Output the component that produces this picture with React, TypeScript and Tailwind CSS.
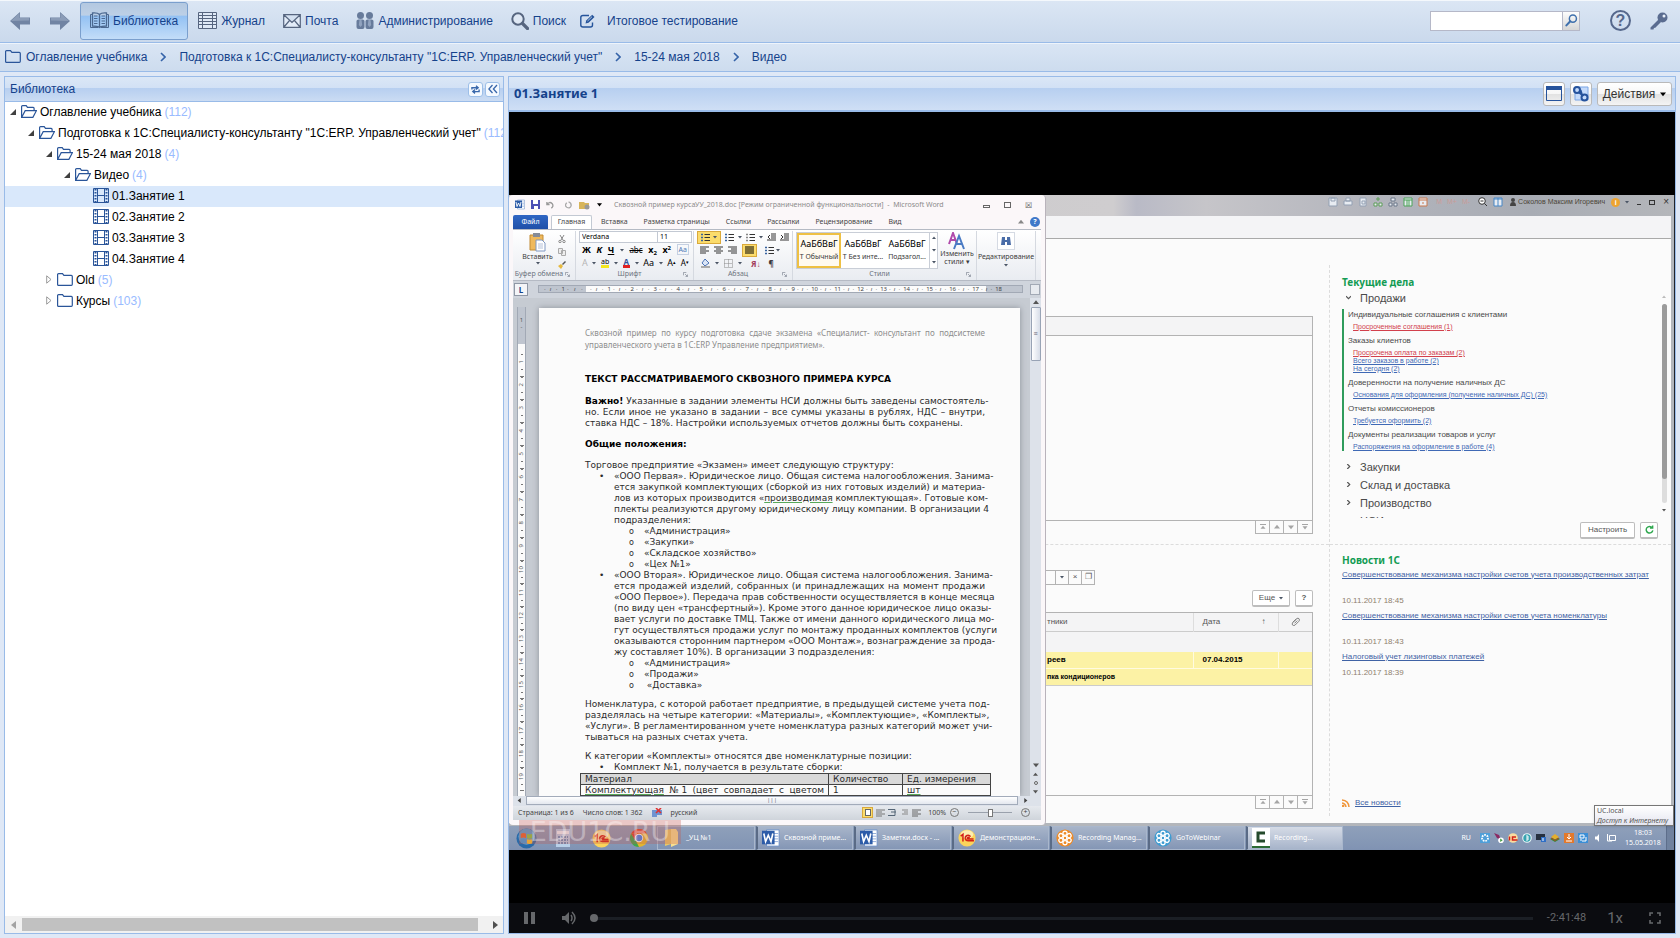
import type { ReactNode } from "react";
import clsx from "clsx";

const crumbs = [
  "Оглавление учебника",
  'Подготовка к 1С:Специалисту-консультанту "1С:ERP. Управленческий учет"',
  "15-24 мая 2018",
  "Видео",
];

type Node = { label: string; count?: number; pad: string; kind: "open" | "closed" | "film" };

const tree: Node[] = [
  { label: "Оглавление учебника", count: 112, pad: "pl-[4px]", kind: "open" },
  { label: crumbs[1], count: 112, pad: "pl-[22px]", kind: "open" },
  { label: "15-24 мая 2018", count: 4, pad: "pl-[40px]", kind: "open" },
  { label: "Видео", count: 4, pad: "pl-[58px]", kind: "open" },
  { label: "01.Занятие 1", pad: "pl-[76px]", kind: "film" },
  { label: "02.Занятие 2", pad: "pl-[76px]", kind: "film" },
  { label: "03.Занятие 3", pad: "pl-[76px]", kind: "film" },
  { label: "04.Занятие 4", pad: "pl-[76px]", kind: "film" },
  { label: "Old", count: 5, pad: "pl-[40px]", kind: "closed" },
  { label: "Курсы", count: 103, pad: "pl-[40px]", kind: "closed" },
];

/* ---------- icons ---------- */

const Arrow = ({ flip }: { flip?: boolean }) => (
  <svg viewBox="0 0 20 20" className={clsx("w-5 h-5", flip && "-scale-x-100")}>
    <path d="M0 10 10 1v5.500h10v7H10V19z" fill="#7184a3" />
    <path d="M1 10 9.500 2v5H19v2.500z" fill="#8b9cb7" />
  </svg>
);

const BookIcon = () => (
  <svg viewBox="0 0 19 17" className="w-[19px] h-[17px]" fill="none" stroke="#4b6890">
    <path d="M9.500 2.500C8 1 5 .8 2.500 1v13c3 0 5.500.2 7 1.500 1.500-1.300 4-1.500 7-1.500V1c-2.500-.2-5.500 0-7 1.500zv13" strokeWidth="1.300" />
    <path d="M2.500 2.500h-2v13h7.500M16.500 2.500h2v13H11M4 4h3.500M4 6.500h3.500M4 9h3.500M4 11.500h3.500M11.500 4H15M11.500 6.500H15M11.500 9H15M11.500 11.500H15" />
  </svg>
);

const JournalIcon = () => (
  <svg viewBox="0 0 19 17" className="w-[19px] h-[17px]" fill="#dfe9f6" stroke="#56657f">
    <path d="M.5.500h18v16H.500zM.500 3.500h18M.500 6.500h18M.500 9.500h18M.500 12.500h18M4.500.500v16M14.500.500v16" />
  </svg>
);

const MailIcon = () => (
  <svg viewBox="0 0 18 14" className="w-[18px] h-[14px]" fill="#e3ecf8" stroke="#56657f" strokeWidth="1.200">
    <path d="M.7.700h16.600v12.600H.700zM1 1l8 7.500L17 1M1 13l5.500-6.500M17 13l-5.500-6.500" />
  </svg>
);

const PeopleIcon = () => (
  <svg viewBox="0 0 18 17" className="w-[18px] h-[17px]" fill="#677b9b">
    <circle cx="4.500" cy="3.500" r="3.500" />
    <circle cx="13.500" cy="3.500" r="3.500" />
    <path d="M.5 9q0-1.500 2-1.500h4q2 0 2 1.500v6q0 2-2 2h-4q-2 0-2-2zM9.500 9q0-1.500 2-1.500h4q2 0 2 1.500v6q0 2-2 2h-4q-2 0-2-2z" />
    <path d="M3.500 8h2l.7 5-1.700 2-1.700-2zM12.500 8h2l.7 5-1.700 2-1.700-2z" fill="#91a3bf" />
  </svg>
);

const SearchIcon = () => (
  <svg viewBox="0 0 18 18" className="w-[18px] h-[18px]" fill="none">
    <circle cx="7" cy="7" r="5.700" stroke="#56657f" strokeWidth="2" fill="#dfe8f4" />
    <path d="m11.500 11.500 5 5" stroke="#56657f" strokeWidth="3.200" strokeLinecap="round" />
  </svg>
);

const EditIcon = () => (
  <svg viewBox="0 0 16 14" className="w-4 h-[14px]" fill="none" stroke="#25549b" strokeWidth="1.400">
    <path d="M9 1.500H3q-2.200 0-2.200 2v7.500q0 2 2.200 2h7.500q2 0 2-2V8.500" />
    <path d="m5.500 9.500.7-3 6-5.800 2.300 2.200-6 5.800z" fill="#25549b" stroke="none" />
    <path d="m7.500 7 4.500-4.300" stroke="#d5e2f2" strokeWidth=".8" />
  </svg>
);

const Magnifier = () => (
  <svg viewBox="0 0 14 14" className="w-[13px] h-[13px]" fill="none" stroke="#3f70ad">
    <circle cx="8.500" cy="5" r="3.800" strokeWidth="1.600" />
    <path d="M5.700 7.800 1.500 12.300" strokeWidth="2.200" strokeLinecap="round" />
  </svg>
);

const KeyIcon = () => (
  <svg viewBox="0 0 18 18" className="w-[18px] h-[18px]" fill="#5a6c90">
    <circle cx="12.500" cy="5.500" r="5" />
    <path d="m8.500 7.500 2.500 2.500-6 6-1-.300-.500 1.800H.500v-2z" />
    <circle cx="14" cy="4" r="1.500" fill="#e8f0fa" />
  </svg>
);

const FolderIcon = ({ open }: { open?: boolean }) => (
  <svg viewBox="0 0 16 13" className="w-4 h-[13px] shrink-0" fill="none" stroke="#2a5599" strokeWidth="1.200">
    {open ? (
      <path d="M.6 12.300V1.500q0-.900 1-.900h3.600l1.300 1.800h5.700q.900 0 .900 1v2.200M.700 12.300 4.200 5.700h11.200l-3.500 6.600z" />
    ) : (
      <path d="M.6 11.200V1.600q0-1 1-1h3.900l1.400 1.800h7.400q1 0 1 1v7.800q0 1.200-1 1.200H1.600q-1 0-1-1.200z" />
    )}
  </svg>
);

const FilmIcon = () => (
  <svg viewBox="0 0 16 15" className="w-4 h-[15px] shrink-0" fill="none" stroke="#2a5599">
    <path d="M.5.500h15v14H.500zM4.500.500v14M11.500.500v14M4.500 7.500h7" />
    <path d="M2.500 1v13M13.500 1v13" strokeWidth="2" strokeDasharray="1.500 1.500" />
  </svg>
);

const Chevron = () => (
  <svg viewBox="0 0 6 10" className="w-[6px] h-[10px]" fill="none" stroke="#3563a8" strokeWidth="1.600">
    <path d="m1 1 4 4-4 4" />
  </svg>
);

const Tri = ({ dir = "down", className }: { dir?: "down" | "up" | "left" | "right"; className?: string }) => {
  const d = { down: "M0 2h8L4 7z", up: "M0 6h8L4 1z", left: "M6 0v8L1 4z", right: "M2 0v8l5-4z" }[dir];
  return (
    <svg viewBox="0 0 8 8" className={clsx("shrink-0", className ?? "w-1 h-1 text-gray-600")}>
      <path d={d} fill="currentColor" />
    </svg>
  );
};

const WordLogo = ({ className }: { className: string }) => (
  <svg viewBox="0 0 20 20" className={className}>
    <path d="M5 1h14v18H5z" fill="#fff" stroke="#6b8fc7" />
    <path d="M13 5h5M13 8h5M13 11h5M13 14h5" stroke="#8aa7d6" />
    <path d="M0 2h14v15H0z" fill="#2d5ca8" />
    <path d="m2 5 2 9 3-7 3 7 2-9" fill="none" stroke="#fff" strokeWidth="1.800" />
  </svg>
);

const OneC = ({ className }: { className: string }) => (
  <svg viewBox="0 0 20 20" className={className}>
    <circle cx="10" cy="10" r="9.500" fill="#fbd45a" />
    <ellipse cx="10" cy="6" rx="7" ry="4.500" fill="#fdeeb0" />
    <path d="M3 8 5.500 6v8M14 8.500q-1.500-2-4-1.200-2.300 1-1.800 3.500.500 2.200 3 2.200h6.500M13 10q-1-1-2.200-.400-.800 1 .500 1.400h6" fill="none" stroke="#d32217" strokeWidth="1.700" />
  </svg>
);

const Flower = ({ className, color }: { className: string; color: string }) => (
  <svg viewBox="0 0 20 20" className={className}>
    <circle cx="10" cy="10" r="9.500" fill={color} />
    {[0, 60, 120, 180, 240, 300].map((a) => (
      <circle key={a} cx="10" cy="4.800" r="2.300" fill="none" stroke="#fff" strokeWidth="1.400" transform={`rotate(${a} 10 10)`} />
    ))}
    <circle cx="10" cy="10" r="2" fill="none" stroke="#fff" strokeWidth="1.300" />
  </svg>
);

/* ---------- portal chrome ---------- */

const NavButton = ({ icon, children, className }: { icon: ReactNode; children: ReactNode; className?: string }) => (
  <button type="button" className={clsx("flex items-center gap-1 whitespace-nowrap", className)}>
    {icon}
    {children}
  </button>
);

const TopBar = () => (
  <header className="h-[43px] shrink-0 flex items-center pl-[10px] pr-3 pb-[2px] border-b border-[#99bbe8] border-t border-t-[#f4f8fc] bg-linear-to-b from-[#dbe6f4] to-[#cad9ec]">
    <button type="button" aria-label="Назад"><Arrow /></button>
    <button type="button" aria-label="Вперед" className="ml-5"><Arrow flip /></button>
    <nav className="flex items-center ml-[10px]">
      <NavButton
        icon={<BookIcon />}
        className="h-[38px] px-[9px] rounded-[3px] border border-[#7a9fcd] bg-[linear-gradient(#b3c8e0_0,#bdd0e6_34%,#93c1f3_36%,#c3ddf8_100%)]"
      >
        Библиотека
      </NavButton>
      <NavButton icon={<JournalIcon />} className="ml-[10px]">Журнал</NavButton>
      <NavButton icon={<MailIcon />} className="ml-[18px]">Почта</NavButton>
      <NavButton icon={<PeopleIcon />} className="ml-[18px]">Администрирование</NavButton>
      <NavButton icon={<SearchIcon />} className="ml-[18px]">Поиск</NavButton>
      <NavButton icon={<EditIcon />} className="ml-[14px] gap-[11px]">Итоговое тестирование</NavButton>
    </nav>
    <form className="ml-auto flex h-5">
      <input type="text" aria-label="Поиск по тексту" className="w-[133px] border border-[#b5b8c8] bg-white px-1 outline-none" />
      <button type="button" aria-label="Найти" className="w-[17px] flex items-center justify-center border border-l-0 border-[#b5b8c8] bg-linear-to-b from-[#fdfdfd] to-[#d6d6d6]">
        <Magnifier />
      </button>
    </form>
    <button type="button" aria-label="Справка" className="ml-[30px] w-[21px] h-[21px] rounded-full border-2 border-[#56688c] text-[#56688c] text-[16px] leading-[16px] font-bold flex items-center justify-center">
      ?
    </button>
    <button type="button" aria-label="Доступ" className="ml-[19px]"><KeyIcon /></button>
  </header>
);

const Breadcrumbs = () => (
  <nav className="h-[29px] shrink-0 flex items-center gap-[13px] px-[5px] pb-[2px] border-b border-[#99bbe8] border-t border-t-[#eef4fb] bg-linear-to-b from-[#d9e5f4] to-[#cddcee]">
    {crumbs.map((c, i) => (
      <span key={c} className="flex items-center gap-[13px] whitespace-nowrap">
        {i > 0 && <Chevron />}
        <a href="#" className="flex items-center gap-[5px]">
          {i === 0 && <FolderIcon />}
          {c}
        </a>
      </span>
    ))}
  </nav>
);

const ToolButton = ({ label, children }: { label: string; children: ReactNode }) => (
  <button type="button" aria-label={label} className="w-[15px] h-[15px] rounded-[3px] border border-[#9dbfe8] bg-[#f4f9ff] flex items-center justify-center">
    {children}
  </button>
);

const TreePanel = () => (
  <aside className="w-[500px] shrink-0 flex flex-col border border-[#99bbe8] bg-white">
    <div className="h-[25px] shrink-0 flex items-center gap-[2px] pl-[5px] pr-[3px] border-b border-[#99bbe8] bg-[linear-gradient(#dbe7f6_0,#d2e1f5_45%,#b7cff0_48%,#cbdcf3_100%)]">
      <h2 className="flex-1">Библиотека</h2>
      <ToolButton label="Обновить">
        <svg viewBox="0 0 10 10" className="w-[9px] h-[9px]" fill="none" stroke="#3a68ab" strokeWidth="1.500">
          <path d="M1 5V3h6M5.500.800 8 3 5.500 5M9 5v2.300H3M4.500 5 2 7.300l2.500 2" />
        </svg>
      </ToolButton>
      <ToolButton label="Свернуть">
        <svg viewBox="0 0 10 10" className="w-[10px] h-[10px]" fill="none" stroke="#3a68ab" strokeWidth="1.300">
          <path d="M4.500 1 .9 5l3.600 4M9 1 5.400 5 9 9" />
        </svg>
      </ToolButton>
    </div>
    <ul className="flex-1 overflow-hidden text-black">
      {tree.map((n) => (
        <li key={n.label} className={clsx("h-[21px] flex items-center pb-[2px] whitespace-nowrap", n.pad, n.label.startsWith("01.") && "bg-[#d9e8fb]")}>
          <span className="w-[12px] shrink-0">
            {n.kind === "open" && (
              <svg viewBox="0 0 7 7" className="w-[6px] h-[6px] ml-[1px]"><path d="M7 0v7H0z" fill="#404040" /></svg>
            )}
            {n.kind === "closed" && (
              <svg viewBox="0 0 6 9" className="w-[6px] h-[9px] ml-[1px]"><path d="M.7.800v7.400L5 4.500z" fill="#fff" stroke="#9a9a9a" /></svg>
            )}
          </span>
          <a href="#" className="flex items-center gap-[3px]">
            {n.kind === "film" ? <FilmIcon /> : <FolderIcon open={n.kind === "open"} />}
            {n.label}
            {n.count && <span className="text-[#99bbff]">({n.count})</span>}
          </a>
        </li>
      ))}
    </ul>
    <div className="h-[17px] shrink-0 flex items-center bg-[#f1f1f1]">
      <span className="w-[17px] flex justify-center"><Tri dir="left" className="w-2 h-2 text-[#a3a3a3]" /></span>
      <span className="flex-1 h-[13px] bg-[#c1c1c1] mr-2" />
      <span className="w-[17px] flex justify-center"><Tri dir="right" className="w-2 h-2 text-[#505050]" /></span>
    </div>
  </aside>
);

/* ---------- Word window ---------- */

const PARA = "[text-align-last:justify]";

const Lines = ({ lines }: { lines: ReactNode[] }) => (
  <>
    {lines.map((l, i) => (
      <span key={i} className={clsx("block whitespace-nowrap", i < lines.length - 1 && PARA)}>{l}</span>
    ))}
  </>
);

const Spell = ({ children }: { children: ReactNode }) => (
  <span className="underline decoration-[#58a85a]">{children}</span>
);

const SubList = ({ items }: { items: string[] }) => (
  <ul>
    {items.map((s) => (
      <li key={s} className="flex whitespace-pre">
        <span className="w-[30px] shrink-0 pl-[15px] text-[8px]">o</span>
        {s}
      </li>
    ))}
  </ul>
);

const Bullet = ({ lines, children }: { lines: ReactNode[]; children?: ReactNode }) => (
  <li className="flex">
    <span className="w-[29px] shrink-0 pl-[14px]">•</span>
    <div className="flex-1 min-w-0">
      <Lines lines={lines} />
      {children}
    </div>
  </li>
);

const first = [
  "«ООО Первая». Юридическое лицо. Общая система налогообложения. Занима-",
  "ется закупкой комплектующих (сборкой из них готовых изделий) и материа-",
  <>лов из которых производится «<Spell>производимая</Spell> комплектующая». Готовые ком-</>,
  "плекты реализуются другому юридическому лицу компании. В организации 4",
  "подразделения:",
];

const second = [
  "«ООО Вторая». Юридическое лицо. Общая система налогообложения. Занима-",
  "ется продажей изделий, собранных (и принадлежащих на момент продажи",
  "«ООО Первое»). Передача прав собственности осуществляется в конце месяца",
  "(по виду цен «трансфертный»). Кроме этого данное юридическое лицо оказы-",
  "вает услуги по доставке ТМЦ. Также от имени данного юридического лица мо-",
  "гут осуществляться продажи услуг по монтажу проданных комплектов (услуги",
  "оказываются сторонним партнером «ООО Монтаж», вознаграждение за прода-",
  "жу составляет 10%). В организации 3 подразделения:",
];

const DocumentPage = () => (
  <article className="flex-1 min-w-0 mt-[10px] ml-[13px] mr-[10px] pt-[19px] pl-[46px] pr-[35px] bg-[#fbfbfb] shadow-[0_0_6px_#8c9199] font-['DejaVu_Sans',sans-serif] text-[9px] leading-[11px] text-[#2b2b2b]">
    <p className="font-['Noto_Sans',sans-serif] text-[8px] leading-[12px] text-[#8d8d8d] whitespace-nowrap">
      <span className={clsx("block", PARA)}>Сквозной пример по курсу подготовка сдаче экзамена «Специалист- консультант по подсистеме</span>
      управленческого учета в 1С:ERP Управление предприятием».
    </p>
    <h3 className="mt-[23px] font-bold text-black whitespace-nowrap">ТЕКСТ РАССМАТРИВАЕМОГО СКВОЗНОГО ПРИМЕРА КУРСА</h3>
    <p className="mt-[11px] whitespace-nowrap">
      <span className={clsx("block", PARA)}><b className="text-black">Важно!</b> Указанные в задании элементы НСИ должны быть заведены самостоятель-</span>
      <span className={clsx("block", PARA)}>но. Если иное не указано в задании – все суммы указаны в рублях, НДС – внутри,</span>
      ставка НДС – 18%. Настройки используемых отчетов должны быть сохранены.
    </p>
    <h3 className="mt-[10px] font-bold text-black">Общие положения:</h3>
    <p className="mt-[10px] whitespace-nowrap">Торговое предприятие «Экзамен» имеет следующую структуру:</p>
    <ul>
      <Bullet lines={first}>
        <SubList items={["«Администрация»", "«Закупки»", "«Складское хозяйство»", "«Цех №1»"]} />
      </Bullet>
      <Bullet lines={second}>
        <SubList items={["«Администрация»", "«Продажи»", " «Доставка»"]} />
      </Bullet>
    </ul>
    <p className="mt-[8px]">
      <Lines
        lines={[
          "Номенклатура, с которой работает предприятие, в предыдущей системе учета под-",
          "разделялась на четыре категории: «Материалы», «Комплектующие», «Комплекты»,",
          "«Услуги». В регламентированном учете номенклатура разных категорий может учи-",
          "тываться на разных счетах учета.",
        ]}
      />
    </p>
    <p className="mt-[8px]">К категории «Комплекты» относятся две номенклатурные позиции:</p>
    <ul>
      <Bullet lines={["Комплект №1, получается в результате сборки:"]} />
    </ul>
    <table className="-ml-[5px] w-[411px] table-fixed border-collapse border border-[#222] whitespace-nowrap leading-[10px]">
      <thead>
        <tr className="bg-[#d9d9d9] text-left">
          <th className="w-[248px] border border-[#444] px-1 py-0 font-normal">Материал</th>
          <th className="w-[74px] border border-[#444] px-1 py-0 font-normal">Количество</th>
          <th className="border border-[#444] px-1 py-0 font-normal">Ед. измерения</th>
        </tr>
      </thead>
      <tbody>
        <tr>
          <td className={clsx("border border-[#444] px-1 py-0", PARA)}>
            <Spell>Комплектующая</Spell> №1 (цвет совпадает с цветом
          </td>
          <td className="border border-[#444] px-1 py-0">1</td>
          <td className="border border-[#444] px-1 py-0"><Spell>шт</Spell></td>
        </tr>
      </tbody>
    </table>
  </article>
);

const AlignIcon = ({ d = "M0 1h9M0 3h6M0 5h9M0 7h6", color = "#333" }: { d?: string; color?: string }) => (
  <svg viewBox="0 0 9 8" className="w-[9px] h-2 shrink-0" fill="none" stroke={color}><path d={d} /></svg>
);

const ListIcon = ({ color = "#35629f" }: { color?: string }) => (
  <svg viewBox="0 0 9 9" className="w-[9px] h-[9px] shrink-0" fill="none">
    <path d="M0 1.500h2M0 4.500h2M0 7.500h2" stroke={color} strokeWidth="1.600" />
    <path d="M3.500 1.500H9M3.500 4.500H9M3.500 7.500H9" stroke="#333" />
  </svg>
);

const Launcher = () => (
  <svg viewBox="0 0 6 6" className="w-[5px] h-[5px] mr-[5px] shrink-0" fill="none" stroke="#8b929e"><path d="M.5 4V.500H4M2.500 2.500 5 5M5.500 3v2.500H3" /></svg>
);

const Group = ({ label, className, children }: { label?: string; className: string; children: ReactNode }) => (
  <div className={clsx("flex flex-col border-r border-[#d5d9e0]", className)}>
    <div className="flex-1 min-h-0">{children}</div>
    <div className="h-[11px] flex items-center text-[7px] leading-[10px] text-[#6c7480] whitespace-nowrap">
      <span className="flex-1 text-center">{label}</span>
      {label && <Launcher />}
    </div>
  </div>
);

const Ribbon = () => (
  <div className="h-[52px] shrink-0 flex pt-[1px] border-t border-b border-[#b5bac4] bg-linear-to-b from-white to-[#e9ecf1] text-[7px] leading-[9px] text-[#3b3b3b]">
    <Group label="Буфер обмена" className="w-[63px]">
      <div className="flex gap-1 pl-2 pt-[2px]">
        <button type="button" className="flex flex-col items-center w-[33px]">
          <svg viewBox="0 0 17 19" className="w-[17px] h-[19px]">
            <path d="M1 2h13v15H1z" fill="#efb95c" stroke="#c18b35" />
            <path d="M4 0h7v4H4z" fill="#868c98" />
            <path d="M7 7h6l3 3v8H7z" fill="#fff" stroke="#7f98c2" />
            <path d="M9 11h5M9 13h5M9 15h5" stroke="#b4c1d9" />
          </svg>
          Вставить
          <Tri />
        </button>
        <div className="flex flex-col gap-[5px] pt-[2px]">
          <svg viewBox="0 0 8 8" className="w-2 h-2" fill="none" stroke="#888"><path d="m2 0 3 5M6 0 3 5" /><circle cx="2" cy="6.500" r="1.200" /><circle cx="6" cy="6.500" r="1.200" /></svg>
          <svg viewBox="0 0 8 8" className="w-2 h-2" fill="#eee" stroke="#aaa"><path d="M.5.500h4v5h-4zM3.500 2.500h4v5h-4z" /></svg>
          <svg viewBox="0 0 8 8" className="w-2 h-2"><path d="m0 5 3-2 2 2-2 3z" fill="#e6b93f" /><path d="m4 3 3-3 1 1-3 3z" fill="#555" /></svg>
        </div>
      </div>
    </Group>
    <Group label="Шрифт" className="w-[118px]">
      <div className="flex pl-[3px] text-black">
        <select aria-label="Шрифт" className="appearance-none w-[79px] h-3 pl-[2px] border border-[#c3c9d3] bg-white text-[7px] leading-[9px]"><option>Verdana</option></select>
        <select aria-label="Размер" className="appearance-none w-[34px] h-3 pl-[2px] border border-l-0 border-[#c3c9d3] bg-white text-[7px] leading-[9px]"><option>11</option></select>
      </div>
      <div className="flex items-center justify-between pl-[6px] pr-1 h-[14px] text-[9px] text-black">
        <b>Ж</b><b className="italic">К</b><b className="underline">Ч</b><Tri /><span className="line-through text-[8px]">abc</span>
        <b>x<sub className="text-[6px]">2</sub></b><b>x<sup className="text-[6px]">2</sup></b>
        <span className="border border-[#c5d0e2] text-[#4f78b8] text-[7px] px-[1px]">Аа</span>
      </div>
      <div className="flex items-center justify-between pl-[6px] pr-1 h-[12px] text-[9px] text-black">
        <span className="text-[#b5b5b5]">A</span><Tri />
        <span className="border-b-[3px] border-[#f4e61c] text-[7px] leading-[7px]">ab</span><Tri />
        <b className="border-b-[3px] border-[#e02020] text-[#35549a] text-[8px] leading-[7px] px-[1px]">A</b><Tri />
        <span>Aa</span><Tri /><span>A<sup className="text-[5px]">▴</sup></span><span className="text-[8px]">A<sup className="text-[5px]">▾</sup></span>
      </div>
    </Group>
    <Group label="Абзац" className="w-[99px]">
      <div className="flex items-center gap-1 pl-[3px] h-[13px]">
        <span className="flex items-center gap-[3px] h-[13px] px-[3px] border border-[#d9a93c] bg-[#fbdc6c]"><ListIcon /><Tri /></span>
        <ListIcon /><Tri /><ListIcon color="#888" /><Tri />
        <AlignIcon d="M4 1h5M4 3h5M4 5h5M0 7h9M3 2 1 4l2 2" /><AlignIcon d="M4 1h5M4 3h5M4 5h5M0 7h9M1 2l2 2-2 2" />
      </div>
      <div className="flex items-center gap-[5px] pl-[6px] h-[13px]">
        <AlignIcon /><AlignIcon d="M0 1h9M2 3h5M0 5h9M2 7h5" /><AlignIcon d="M0 1h9M3 3h6M0 5h9M3 7h6" />
        <span className="flex items-center h-[13px] px-[2px] border border-[#d9a93c] bg-[#fbdc6c]"><AlignIcon d="M0 1h9M0 3h9M0 5h9M0 7h9" color="#000" /></span>
        <span className="flex items-center gap-[2px] ml-[3px]"><ListIcon /><Tri /></span>
      </div>
      <div className="flex items-center gap-[5px] pl-[7px] h-[13px] text-[8px]">
        <svg viewBox="0 0 9 9" className="w-[9px] h-[9px]"><path d="m4 0 4 4-4 3-3-3z" fill="#dbe6f7" stroke="#4d74b5" /><path d="M0 8h9" stroke="#aaa" strokeWidth="2" /></svg><Tri />
        <svg viewBox="0 0 9 9" className="w-[9px] h-[9px]" fill="none" stroke="#888" strokeDasharray="1 1"><path d="M.5.500h8v8h-8zM.500 4.500h8M4.500.500v8" /></svg><Tri />
        <b className="ml-1 text-[#a33d5c]">Я↓</b><b className="ml-[3px]">¶</b>
      </div>
    </Group>
    <Group label="Стили" className="w-[184px]">
      <div className="flex pl-[3px] pt-[1px]">
        <div className="flex w-[142px] h-[37px] border border-[#c9ced7] bg-white">
          {["Т Обычный", "Т Без инте...", "Подзагол..."].map((s, i) => (
            <button key={s} type="button" className={clsx("flex flex-col items-center justify-center gap-[4px] w-[44px] overflow-hidden whitespace-nowrap", i === 0 && "border-2 border-[#eec044] bg-[#fffaf0]")}>
              <span className="text-[9px] text-black">АаБбВвГ</span>
              <span>{s}</span>
            </button>
          ))}
          <span className="flex-1 flex flex-col items-center justify-around border-l border-[#c9ced7]"><Tri dir="up" /><Tri /><Tri /></span>
        </div>
        <button type="button" className="flex flex-col items-center flex-1">
          <svg viewBox="0 0 18 18" className="w-[18px] h-[18px]" fill="none" strokeWidth="2">
            <path d="M1 12 5 1l4 11M3 8h4" stroke="#b04bab" /><path d="m6 17 5-13 5 13M8 12h6" stroke="#4a7bc4" />
          </svg>
          <span className="leading-[8px]">Изменить<br />стили ▾</span>
        </button>
      </div>
    </Group>
    <Group className="w-[59px]">
      <button type="button" className="w-full flex flex-col items-center gap-[2px] pt-[1px]">
        <span className="w-[18px] h-[18px] flex items-center justify-center border border-[#d5dae3] bg-white">
          <svg viewBox="0 0 10 9" className="w-[10px] h-[9px]" fill="#4a6da8"><path d="M1 1h3v3h2V1h3l1 8H6V6H4v3H0z" /></svg>
        </span>
        Редактирование
        <Tri />
      </button>
    </Group>
  </div>
);

const HorizontalRuler = () => (
  <div className="h-[17px] shrink-0 flex items-center bg-[#cfd4dc]">
    <span className="w-[14px] h-[13px] ml-[1px] border border-[#8f97a5] bg-[#f4f5f8] text-[8px] leading-[11px] font-bold text-center">L</span>
    <div className="w-[485px] h-2 ml-[10px] pl-[3px] flex border border-[#a2a9b5] text-[6px] leading-[6px] text-[#444] bg-[linear-gradient(to_right,#bfc5cf_47px,#fbfbfb_47px,#fbfbfb_447px,#bfc5cf_447px)]">
      {["1", "", ...Array.from({ length: 18 }, (_, i) => String(i + 1))].map((n, i) => (
        <span key={i} className="w-[23px] flex justify-between pl-[2px]"><i>·</i><i>ı</i><i>·</i><span>{n}</span></span>
      ))}
    </div>
    <span className="ml-auto mr-[1px] w-[10px] h-[11px] border border-[#a2a9b5] bg-[#e7eaef]" />
  </div>
);

const VerticalRuler = () => (
  <div className="w-[9px] ml-1 mt-[9px] shrink-0 flex flex-col border-x border-[#a2a9b5] bg-[#fbfbfb] text-[6px] leading-[7px] text-[#555] overflow-hidden">
    <span className="h-[37px] shrink-0 pt-[10px] bg-[#bfc5cf] text-center">1<br />-</span>
    <div className="pt-[10px]">
      {Array.from({ length: 19 }, (_, i) => (
        <span key={i} className="h-[23px] flex flex-col items-center justify-between leading-[5px]">
          <span className="h-px w-[2px] bg-[#777]" />
          <span className="[writing-mode:vertical-rl] rotate-180">{i + 1}</span>
          <span className="h-px w-[2px] bg-[#777]" />
          <span className="h-px w-1 bg-[#777]" />
        </span>
      ))}
    </div>
  </div>
);

const WordWindow = () => (
  <section className="absolute left-0 top-0 w-[537px] h-[630px] flex flex-col px-1 pb-[5px] rounded-[4px] border-r border-[#b9b3bb] bg-[#fbf7f9] font-['Noto_Sans',sans-serif] overflow-hidden">
    <div className="h-5 shrink-0 flex items-center gap-[6px] pl-[2px] pr-[9px]">
      <WordLogo className="w-[10px] h-[11px]" />
      <svg viewBox="0 0 9 9" className="w-[9px] h-[9px]"><path d="M0 0h9v9H0z" fill="#4b50b4" /><path d="M2 0h5v4H2zM3 6h4v3H3z" fill="#fff" /></svg>
      <svg viewBox="0 0 9 9" className="w-2 h-2" fill="none" stroke="#999" strokeWidth="1.500"><path d="M1 1v3h3M1 4q3-4 6-1 2 3-1 5" /></svg>
      <svg viewBox="0 0 9 9" className="w-2 h-2 ml-[5px]" fill="none" stroke="#aaa" strokeWidth="1.500"><path d="M2 2q-3 3 0 5 4 2 5-2 0-3-3-4" /></svg>
      <svg viewBox="0 0 12 10" className="w-3 h-[10px]"><path d="M0 2h5l1 1h4v6H0z" fill="#d8b55a" /><circle cx="8" cy="7" r="2.500" fill="#999" /></svg>
      <Tri className="w-[5px] h-[5px] text-black" />
      <h3 className="ml-[6px] text-[7px] leading-[10px] text-[#8b8b8b] whitespace-nowrap">Сквозной пример курсаУУ_2018.doc [Режим ограниченной функциональности]&nbsp; -&nbsp; Microsoft Word</h3>
      <span className="ml-auto flex items-center gap-[14px]">
        <button type="button" aria-label="Свернуть окно" className="w-[7px] h-[3px] mt-1 border border-[#666]" />
        <button type="button" aria-label="Восстановить" className="w-[7px] h-[6px] border border-[#666]" />
        <button type="button" aria-label="Закрыть окно" className="text-[8px] leading-[8px] text-[#555]">☒</button>
      </span>
    </div>
    <div className="h-[14px] shrink-0 flex items-center text-[7px] leading-[10px] text-[#444] whitespace-nowrap">
      <button type="button" className="w-[35px] h-[14px] rounded-t-[2px] bg-linear-to-b from-[#2f66c4] to-[#1f4fa8] text-white">Файл</button>
      <button type="button" className="w-[41px] h-[14px] ml-[3px] border border-b-0 border-[#c3c9d3] rounded-t-[2px] bg-white">Главная</button>
      <span className="flex gap-4 ml-[9px]">
        {["Вставка", "Разметка страницы", "Ссылки", "Рассылки", "Рецензирование", "Вид"].map((t) => (
          <button key={t} type="button">{t}</button>
        ))}
      </span>
      <Tri dir="up" className="ml-auto w-[6px] h-[6px] text-[#888]" />
      <span className="ml-[6px] mr-[1px] w-[10px] h-[10px] rounded-full bg-[#3f78c9] text-white text-center font-bold">?</span>
    </div>
    <Ribbon />
    <HorizontalRuler />
    <div className="flex-1 min-h-0 flex bg-[#c6cbd2] overflow-hidden">
      <VerticalRuler />
      <DocumentPage />
      <div className="w-[11px] shrink-0 flex flex-col items-center bg-[#dde2ea]">
        <Tri dir="up" className="w-[6px] h-[9px] text-[#555]" />
        <span className="w-[10px] h-[54px] border border-[#98a3b5] rounded-[1px] bg-linear-to-r from-white to-[#d7dde8] text-[7px] leading-[52px] text-center text-[#667]">≡</span>
        <div className="mt-auto mb-[2px] flex flex-col items-center gap-1">
          <Tri className="w-[6px] h-[6px] text-[#555]" />
          <Tri dir="up" className="w-[5px] h-[5px] text-[#555]" />
          <span className="w-1 h-1 rounded-full border border-[#666]" />
          <Tri className="w-[5px] h-[5px] text-[#555]" />
        </div>
      </div>
    </div>
    <div className="h-[10px] shrink-0 flex items-center bg-[#dde2ea]">
      <span className="w-[13px] flex justify-center"><Tri dir="left" className="w-[5px] h-[5px] text-[#444]" /></span>
      <span className="flex-1 h-[9px] border border-[#a2abba] bg-linear-to-b from-white to-[#e4e8ef] text-[6px] leading-[7px] text-center text-[#667]">|||</span>
      <span className="w-[15px] flex justify-center"><Tri dir="right" className="w-[5px] h-[5px] text-[#444]" /></span>
      <span className="w-2" />
    </div>
    <div className="h-[14px] shrink-0 flex items-center gap-[9px] px-[5px] bg-linear-to-b from-[#e6e9ee] to-[#cfd4db] text-[7px] leading-[10px] text-[#444] whitespace-nowrap">
      <span>Страница: 1 из 6</span>
      <span>Число слов: 1 362</span>
      <svg viewBox="0 0 10 10" className="w-[10px] h-[10px]"><path d="M0 2h5v7H0zM5 2h5v5H5z" fill="#6f93d1" /><path d="m4 0 5 5M9 0 4 5" stroke="#d33" strokeWidth="1.600" /></svg>
      <span>русский</span>
      <span className="ml-auto flex items-center gap-[3px]">
        <span className="w-[11px] h-[11px] flex items-center justify-center border border-[#d9a93c] bg-[#fbdc6c]"><span className="w-[6px] h-[7px] border border-[#666] bg-white" /></span>
        <AlignIcon color="#777" /><AlignIcon d="M0 .5h7v6H0M3 3h5" color="#567" /><AlignIcon d="M2 1h6M4 3h4M2 5h6" color="#888" /><AlignIcon color="#666" />
      </span>
      <span className="-ml-[2px]">100%</span>
      <span className="w-[9px] h-[9px] -ml-[5px] rounded-full border border-[#777] leading-[6px] text-center">−</span>
      <input type="range" aria-label="Масштаб" defaultValue={50} className="appearance-none w-[44px] h-px bg-[#9aa1ac] [&::-webkit-slider-thumb]:appearance-none [&::-webkit-slider-thumb]:w-[5px] [&::-webkit-slider-thumb]:h-2 [&::-webkit-slider-thumb]:border [&::-webkit-slider-thumb]:border-[#777] [&::-webkit-slider-thumb]:bg-white" />
      <span className="w-[9px] h-[9px] mr-[6px] rounded-full border border-[#777] leading-[6px] text-center">+</span>
    </div>
  </section>
);

/* ---------- 1C window ---------- */

const Pager = () => (
  <div className="self-end flex border border-t-0 border-[#b3b3b3] divide-x divide-[#b3b3b3]">
    {(["up", "up", "down", "down"] as const).map((d, i) => (
      <button key={i} type="button" aria-label="Прокрутка" className="w-[14px] h-[12px] flex items-center justify-center">
        <Tri dir={d} className={clsx("w-[6px] h-[6px] text-[#a5a5a5]", (i === 0 || i === 3) && "border-t border-[#a5a5a5]")} />
      </button>
    ))}
  </div>
);

const todo = [
  { title: "Индивидуальные соглашения с клиентами", links: [["Просроченные соглашения (1)", true]] },
  { title: "Заказы клиентов", links: [["Просрочена оплата по заказам (2)", true], ["Всего заказов в работе (2)", false], ["На сегодня (2)", false]] },
  { title: "Доверенности на получение наличных ДС", links: [["Основания для оформления (получение наличных ДС) (25)", false]] },
  { title: "Отчеты комиссионеров", links: [["Требуется оформить (2)", false]] },
  { title: "Документы реализации товаров и услуг", links: [["Распоряжения на оформление в работе (4)", false]] },
] as const;

const news = [
  ["Совершенствование механизма настройки счетов учета производственных затрат", "10.11.2017 18:45", "mb-[16px]"],
  ["Совершенствование механизма настройки счетов учета номенклатуры", "10.11.2017 18:43", "mb-[16px]"],
  ["Налоговый учет лизинговых платежей", "10.11.2017 18:39", "mb-[6px]"],
];

const Accordion = ({ children, open }: { children: ReactNode; open?: boolean }) => (
  <button type="button" className="h-[18px] flex items-center text-[11px] leading-[14px] text-[#4a4a4a]">
    <span className="w-[18px] flex pl-1">
      <svg viewBox="0 0 6 6" className={clsx("w-[5px] h-[5px]", open && "rotate-90")} fill="none" stroke="#555" strokeWidth="1.400"><path d="m1.500 0 3 3-3 3" /></svg>
    </span>
    {children}
  </button>
);

const GrayButton = ({ children, className, label }: { children: ReactNode; className?: string; label?: string }) => (
  <button type="button" aria-label={label} className={clsx("h-[17px] flex items-center justify-center rounded-[2px] border border-b-2 border-[#bdbdbd] bg-white text-[8px] text-[#555]", className)}>
    {children}
  </button>
);

const LeftBlocks = () => (
  <div className="flex-1 min-w-0 flex flex-col mt-[26px] mb-[7px] border-r border-dashed border-[#dcdcdc]">
    <div className="h-[280px] shrink-0 flex flex-col pt-[51px] pr-4 border-b border-dashed border-[#dcdcdc]">
      <div className="h-[205px] border border-[#b3b3b3]">
        <div className="h-[19px] border-b border-[#b3b3b3] bg-[#f4f4f5]" />
      </div>
      <Pager />
    </div>
    <div className="flex-1 flex flex-col pt-[25px] pr-4">
      <div className="flex h-[15px] pl-[537px]">
        <span className="w-[9px] border-y border-[#b3b3b3]" />
        {[<Tri key="t" />, "×", "❐"].map((c, i) => (
          <button key={i} type="button" aria-label="Отбор" className="w-[14px] -mr-px flex items-center justify-center border border-[#b3b3b3] text-[8px] leading-[8px] text-[#555]">{c}</button>
        ))}
      </div>
      <div className="flex justify-end gap-[5px] mt-[5px] mb-[5px]">
        <GrayButton className="w-[38px] gap-1">Еще <Tri /></GrayButton>
        <GrayButton className="w-[18px] font-bold">?</GrayButton>
      </div>
      <div className="h-[184px] border border-[#b3b3b3]">
        <table className="w-full table-fixed border-collapse text-left text-[8px] leading-[10px] text-[#555]">
          <thead>
            <tr className="h-[19px] bg-[#f4f4f5] border-b border-[#ccc]">
              <th className="py-0 pl-[537px] font-normal">тники</th>
              <th className="w-[85px] py-0 pl-[9px] pr-3 font-normal border-l border-[#ddd]">
                <span className="flex justify-between">Дата <span>↑</span></span>
              </th>
              <th className="w-[34px] py-0 border-l border-[#ddd]">
                <svg viewBox="0 0 10 10" className="w-[9px] h-[9px] mx-auto" fill="none" stroke="#777"><path d="m2 6 4-4q2-1.500 3 0t-.500 3L4.500 9Q3 10 1.800 9T2 6l4-3.500M4 7l3-3" /></svg>
              </th>
            </tr>
          </thead>
          <tbody>
            <tr className="h-[20px] bg-[#f4f4f5]"><td className="p-0" colSpan={3} /></tr>
            <tr className="h-[17px] bg-[#fcf2a5] text-black font-bold border-b border-[#fffbe0]">
              <td className="py-0 pl-[537px]">реев</td>
              <td className="py-0 pl-[9px] border-l border-[#fffbe0]">07.04.2015</td>
              <td className="p-0 border-l border-[#fffbe0]" />
            </tr>
            <tr className="h-[17px] bg-[#fcf2a5] text-black font-bold border-b border-[#ccc] text-[7px]">
              <td className="py-0 pl-[537px] whitespace-nowrap" colSpan={3}>пка кондиционеров</td>
            </tr>
          </tbody>
        </table>
      </div>
      <Pager />
    </div>
  </div>
);

const RightBlocks = () => (
  <div className="w-[341px] shrink-0 flex flex-col mt-[26px] mb-[7px]">
    <div className="h-[280px] shrink-0 flex flex-col pt-[11px] pl-3 border-b border-dashed border-[#dcdcdc]">
      <h3 className="text-[10px] leading-[12px] font-bold text-[#139c53] font-['Noto_Sans',sans-serif]">Текущие дела</h3>
      <div className="h-[229px] mt-[1px] pr-[4px] flex">
        <div className="flex-1 overflow-hidden">
          <Accordion open>Продажи</Accordion>
          <div className="mt-[2px] pl-1 h-[142px] border-l-2 border-[#2f9c5c]">
            {todo.map((g) => (
              <div key={g.title} className="mb-1">
                <h4 className="text-[8px] leading-[12px] text-[#4a4a4a]">{g.title}</h4>
                <div className="flex flex-col items-start pl-[5px] pt-[2px]">
                  {g.links.map(([t, late]) => (
                    <a key={t} href="#" className={clsx("text-[7px] leading-[8px] underline", late ? "text-[#d2404c]" : "text-[#3f69b5]")}>{t}</a>
                  ))}
                </div>
              </div>
            ))}
          </div>
          <div className="mt-[7px] flex flex-col items-start">
            <Accordion>Закупки</Accordion>
            <Accordion>Склад и доставка</Accordion>
            <Accordion>Производство</Accordion>
            <div className="pl-[18px] h-[18px] pt-[2px] text-[11px] leading-[14px] text-[#4a4a4a]">НСИ</div>
          </div>
        </div>
        <div className="w-[6px] flex flex-col items-center py-[6px]">
          <Tri dir="up" className="w-1 h-1 text-[#bbb]" />
          <span className="w-[5px] flex-1 mt-[5px] mb-[5px] rounded-full bg-[#ddd]"><span className="block h-[88%] rounded-full bg-[#9b9b9b]" /></span>
          <Tri className="w-1 h-1 text-[#555]" />
        </div>
      </div>
      <div className="flex justify-end gap-[5px] mt-[4px] pr-[13px]">
        <GrayButton className="w-[55px]">Настроить</GrayButton>
        <GrayButton className="w-[18px]" label="Обновить список">
          <svg viewBox="0 0 10 10" className="w-[9px] h-[9px]" fill="none" stroke="#2fa84f" strokeWidth="1.600"><path d="M8 3a3.700 3.700 0 1 0 .700 3M8.500.500V3.500h-3" /></svg>
        </GrayButton>
      </div>
    </div>
    <div className="flex-1 flex flex-col items-start pt-[8px] pl-3 text-[8px] leading-[10px]">
      <h3 className="text-[10px] leading-[14px] font-bold text-[#139c53] font-['Noto_Sans',sans-serif]">Новости 1С</h3>
      {news.map(([title, date, gap]) => (
        <div key={title} className="pt-[3px]">
          <a href="#" className={clsx("block text-[#3f62a5] underline whitespace-nowrap", gap)}>{title}</a>
          <time className="block mb-[2px] text-[#8f7f6d]">{date}</time>
        </div>
      ))}
      <a href="#" className="mt-auto mb-[8px] flex items-center gap-[5px] text-[#3f62a5] underline">
        <svg viewBox="0 0 8 8" className="w-2 h-2" fill="none" stroke="#f0963a" strokeWidth="1.500"><path d="M0 1q6.500.500 7 7M0 4q3.500.500 4 4" /><circle cx="1" cy="7" r=".6" /></svg>
        Все новости
      </a>
    </div>
  </div>
);

const TitleIcon = ({ d, color }: { d: string; color: string }) => (
  <svg viewBox="0 0 10 10" className="w-[10px] h-[10px] shrink-0" fill="#e8ecf2" stroke={color}><path d={d} /></svg>
);

const OneCWindow = () => (
  <section className="flex-1 min-h-0 flex flex-col border-r-[3px] border-b-[3px] border-[#b3b6bb] bg-[#fbfbfb] font-['Liberation_Sans',sans-serif]">
    <div className="h-[21px] shrink-0 flex items-center justify-end gap-[5px] pb-[6px] pr-[2px] bg-[linear-gradient(to_right,#c9c8c9_0,#cfcdcf_52%,#b9bac6_54%,#c6c5c9_60%,#b2b4bc_75%,#a8acb4_88%,#b4b6ba_100%)] text-[7px] leading-[10px] text-[#4b4538] whitespace-nowrap">
      <TitleIcon color="#93a0b3" d="M1 1h8v8H1zM3 1h4v3H3z" />
      <TitleIcon color="#93a0b3" d="M1 4h8v4H1zM3 1h4v3H3z" />
      <TitleIcon color="#93a0b3" d="M2 1h6v8H2zM4 4h3v3H4z" />
      <TitleIcon color="#5c9c56" d="M1 6h3v3H1zM6 6h3v3H6zM3 2h4M5 0v4" />
      <TitleIcon color="#6a7788" d="M1 6h3v3H1zM6 6h3v3H6zM3 1h4v3H3z" />
      <TitleIcon color="#4ca459" d="M1 1h8v8H1zM1 3h8M4 3v6M6 3v6" />
      <TitleIcon color="#c9784e" d="M1 1h8v8H1zM1 3h8M4 6h2" />
      <span className="flex gap-[5px] px-[3px] text-[#c99c98]"><span>M</span><span>M+</span><span>M-</span></span>
      <svg viewBox="0 0 10 10" className="w-[10px] h-[10px]" fill="#fff" stroke="#333"><circle cx="4" cy="4" r="3.300" /><path d="M6.500 6.500 9 9M2.500 4h3" /></svg>
      <TitleIcon color="#4787c6" d="M1 1h8v8H1zM1 2h8M5 1v8" />
      <span className="flex items-center gap-[2px] ml-[2px]">
        <svg viewBox="0 0 6 8" className="w-[6px] h-2" fill="#444"><circle cx="3" cy="2" r="2" /><path d="M0 8q0-4 3-4t3 4z" /></svg>
        Соколов Максим Игоревич
      </span>
      <span className="ml-[1px] w-[9px] h-[9px] rounded-full bg-[#eda431] text-white text-center leading-[9px] font-bold">i</span>
      <Tri />
      <span className="flex items-center gap-2 ml-[3px] text-[10px] text-[#333]">
        <span className="w-1 h-[5px] border-b border-[#333]" />
        <span className="w-[6px] h-[5px] border border-[#333]" />
        <span>×</span>
      </span>
    </div>
    <div className="h-[23px] shrink-0 border-b border-[#a9a9a9] bg-[#f4f4f6]" />
    <div className="flex-1 min-h-0 flex">
      <LeftBlocks />
      <RightBlocks />
    </div>
  </section>
);

/* ---------- taskbar ---------- */

const tasks: { icon: ReactNode; label: string; active?: boolean }[] = [
  { icon: <WordLogo className="w-[18px] h-[18px]" />, label: "Сквозной приме..." },
  { icon: <WordLogo className="w-[18px] h-[18px]" />, label: "Заметки.docx - ..." },
  { icon: <OneC className="w-[18px] h-[18px]" />, label: "Демонстрацион..." },
  { icon: <Flower className="w-[18px] h-[18px]" color="#ee8a25" />, label: "Recording Manag..." },
  { icon: <Flower className="w-[18px] h-[18px]" color="#3d9cd2" />, label: "GoToWebinar" },
  {
    icon: <svg viewBox="0 0 18 20" className="w-[18px] h-5"><path d="M0 0h18v20H0z" fill="#fff" /><path d="M13 5H6v8h7" fill="none" stroke="#254a2c" strokeWidth="3" /><path d="M0 18h18v2H0z" fill="#2c6b35" /></svg>,
    label: "Recording...",
    active: true,
  },
];

const TrayIcon = ({ children }: { children: ReactNode }) => (
  <svg viewBox="0 0 10 10" className="w-[10px] h-[10px]" fill="none">{children}</svg>
);

const Tray = () => (
  <span className="flex items-center gap-1 ml-[9px]">
    <TrayIcon><path d="M0 0h10v10H0z" fill="#4f9fd8" /><circle cx="5" cy="5" r="3" stroke="#fff" strokeWidth="1.800" strokeDasharray="1.600 1" /></TrayIcon>
    <TrayIcon><path d="m0 0 5 2 2 5-4-2z" fill="#8b2a63" /><circle cx="7" cy="7.200" r="2.800" fill="#fff" /><path d="m6.200 5.500 2.500 1.700-2.500 1.700z" fill="#3f9a3f" /></TrayIcon>
    <TrayIcon><circle cx="5" cy="5" r="4.800" fill="#f8dca0" /><path d="M1.500 3.500v4M8 4H4.500v3H9.500" stroke="#d32217" strokeWidth="1.500" /></TrayIcon>
    <TrayIcon><circle cx="5" cy="5" r="4.800" fill="#e9f7f8" /><circle cx="5" cy="5" r="3.700" fill="#37a3b0" /><path d="M4 3h2v4H4M4 5h2" stroke="#fff" /></TrayIcon>
    <TrayIcon><path d="M0 1h9v6H0z" fill="#26303f" /><path d="M5 4h5v5H5z" fill="#2f6fc6" /><path d="M7 5v3" stroke="#fff" /></TrayIcon>
    <TrayIcon><path d="m0 6 5-3 5 3-5 3z" fill="#3c8a35" /><path d="m1 4 4-3 4 3-4 2.500z" fill="#e5ae2e" /><path d="m1 5 4 2.500L9 5" stroke="#b5402a" /></TrayIcon>
    <TrayIcon><path d="M0 0h10v10H0z" fill="#e2792c" /><path d="M5 1v4M3 4l2 2 2-2M2 8h6" stroke="#fff" /></TrayIcon>
    <TrayIcon><path d="M0 0h10v10H0z" fill="#3b8fd6" /><path d="M2 2h4v3H2zM4 8h4V4M2 7h2" stroke="#fff" /></TrayIcon>
    <TrayIcon><path d="M3 3.500h2L7 1v8L5 6.500H3z" fill="#fff" /></TrayIcon>
    <TrayIcon><path d="M3.500 2.500h6v5h-6zM1.500 1v7H6" stroke="#fff" /></TrayIcon>
  </span>
);

const Taskbar = () => (
  <div className="relative h-6 shrink-0 flex items-center pl-[7px] bg-linear-to-b from-[#8fa0ba] to-[#8093b3] font-['Noto_Sans',sans-serif] text-[7px] leading-[10px] text-white whitespace-nowrap">
    <svg viewBox="0 0 22 22" className="w-[21px] h-[21px]">
      <circle cx="11" cy="11" r="10.500" fill="#2a6aa8" /><circle cx="11" cy="9" r="8.500" fill="#5ba0d0" />
      <path d="M5 6q3-1.500 5.500 0v4.500q-3-1-5.500 0z" fill="#e9632c" /><path d="M11.500 6.300q2.500 1 5.500 0v4.500q-3 1-5.500 0z" fill="#8cc63e" />
      <path d="M5 11.500q3-1 5.500 0V16q-3-1-5.500 0z" fill="#3fa0e0" /><path d="M11.500 11.800q2.500 1 5.500 0v4.500q-3 1-5.500 0z" fill="#fbc52c" />
    </svg>
    <svg viewBox="0 0 14 18" className="w-[14px] h-[18px] ml-[19px]"><path d="M0 0h14v18H0z" fill="#b9d0e8" /><path d="M1 2h12v3H1z" fill="#eef5fc" /><path d="M2 8h10M2 11h10M2 14h10" stroke="#6c91bd" strokeWidth="2" strokeDasharray="2 1" /></svg>
    <OneC className="w-[19px] h-[19px] ml-[22px]" />
    <svg viewBox="0 0 18 18" className="w-[18px] h-[18px] ml-[19px]">
      <circle cx="9" cy="9" r="9" fill="#e3b62e" /><path d="M1.200 4.500A9 9 0 0 1 16.800 4.500H9z" fill="#d93f2f" /><path d="M1.200 4.500 6 12l3 6A9 9 0 0 1 1.200 4.500z" fill="#3ea450" /><path d="M9 4.500H1.200L5 11z" fill="#d93f2f" />
      <circle cx="9" cy="9" r="4.200" fill="#fff" /><circle cx="9" cy="9" r="3.300" fill="#4283ea" />
    </svg>
    <button type="button" className="w-[98px] h-6 ml-[9px] pl-[7px] flex items-center gap-[8px] border border-[#a9b7cc]">
      <svg viewBox="0 0 13 18" className="w-[13px] h-[18px]"><path d="M0 1 6 0v15l-6 2z" fill="#e9c767" /><path d="M6 0h5l2 3v12l-7 3z" fill="#f8df8f" /></svg>
      _УЦ №1
    </button>
    {tasks.map((t) => (
      <button
        key={t.label}
        type="button"
        className={clsx(
          "w-[97px] h-6 ml-px pl-1 flex items-center gap-[4px] overflow-hidden border border-l-2 border-[#a9b7cc] border-l-[#5a6b86] bg-linear-to-b",
          t.active ? "from-[#d5dbe6] to-[#a7b4ca]" : "from-[#a7b4c9] to-[#8496b5]",
        )}
      >
        <span className="shrink-0">{t.icon}</span>
        {t.label}
      </button>
    ))}
    <span className="ml-auto">RU</span>
    <Tray />
    <span className="w-[46px] ml-1 text-center">18:03<br />15.05.2018</span>
    <span className="w-2 h-6 border-l border-[#5d6e8b] bg-[#70829f]" />
    <span className="absolute left-[10px] -top-[6px] w-[162px] h-6 bg-[#c55a50]/30 font-['DejaVu_Sans',sans-serif] text-[27px] leading-[24px] text-white/35 text-center">EDU1C.RU</span>
    <div className="absolute right-0 bottom-6 w-[80px] h-[21px] pl-[2px] border border-[#777] bg-linear-to-b from-white to-[#e4e5f0] text-[#555] shadow-sm">
      UC.local<br /><i>Доступ к Интернету</i>
    </div>
  </div>
);

/* ---------- player ---------- */

const Player = () => (
  <div className="relative flex-1 min-h-0 flex flex-col justify-center bg-black">
    <div className="relative aspect-video w-full flex flex-col overflow-hidden border-r border-[#20242c] bg-[#b3b6bb]">
      <OneCWindow />
      <WordWindow />
      <Taskbar />
    </div>
    <div className="absolute inset-x-0 bottom-0 h-[30px] flex items-center pl-[15px] pr-[14px] bg-[#0b0c10] text-[#66686b] font-['Roboto',sans-serif]">
      <button type="button" aria-label="Пауза" className="flex gap-[3px]"><span className="w-[4px] h-3 bg-current" /><span className="w-[4px] h-3 bg-current" /></button>
      <button type="button" aria-label="Громкость" className="ml-[27px]">
        <svg viewBox="0 0 15 14" className="w-[15px] h-[14px]" fill="none" stroke="currentColor" strokeWidth="1.500"><path d="M0 5h3l4-4v12L3 9H0z" fill="currentColor" stroke="none" /><path d="M9 4q2 3 0 6M10 1q6 6 0 12" /></svg>
      </button>
      <input
        type="range"
        aria-label="Позиция"
        defaultValue={0}
        className="appearance-none flex-1 min-w-0 ml-[13px] mr-[14px] h-[3px] bg-[#1b1f25] [&::-webkit-slider-thumb]:appearance-none [&::-webkit-slider-thumb]:w-2 [&::-webkit-slider-thumb]:h-2 [&::-webkit-slider-thumb]:rounded-full [&::-webkit-slider-thumb]:bg-[#66686b]"
      />
      <span className="text-[11px]">-2:41:48</span>
      <button type="button" className="ml-[21px] text-[15px]">1x</button>
      <button type="button" aria-label="Во весь экран" className="ml-[26px]">
        <svg viewBox="0 0 12 12" className="w-3 h-3" fill="none" stroke="currentColor" strokeWidth="1.600"><path d="M1 4V1h3M8 1h3v3M11 8v3H8M4 11H1V8" /></svg>
      </button>
    </div>
  </div>
);

const ActionButton = ({ children, label, className }: { children: ReactNode; label?: string; className: string }) => (
  <button type="button" aria-label={label} className={clsx("h-6 flex items-center justify-center rounded-[3px] border border-[#b9b9b9] bg-[linear-gradient(#fff_0,#f6f6f6_50%,#e2e2e2_52%,#f4f4f4_100%)] text-[#333]", className)}>
    {children}
  </button>
);

const LessonPanel = () => (
  <main className="flex-1 min-w-0 flex flex-col border border-[#99bbe8]">
    <div className="h-[35px] shrink-0 flex items-center gap-[5px] pl-[5px] pr-[3px] border-b-2 border-[#99bbe8] bg-[linear-gradient(#dbe7f6_0,#d2e1f5_32%,#b7cff0_34%,#cfdff5_100%)]">
      <h1 className="flex-1 pb-[2px] text-[13px] font-bold font-['Noto_Sans',sans-serif]">01.Занятие 1</h1>
      <ActionButton label="В новом окне" className="w-[22px]">
        <svg viewBox="0 0 16 15" className="w-4 h-[15px]" fill="none" stroke="#26539c"><path d="M.5.500h15v14H.500z" /><path d="M0 2h16" strokeWidth="4" /></svg>
      </ActionButton>
      <ActionButton label="Ссылка" className="w-[22px]">
        <svg viewBox="0 0 16 16" className="w-4 h-4" fill="none" stroke="#26539c" strokeWidth="2">
          <path d="M2 1h13v13H2z" fill="#c4dafa" stroke="#7ba6e6" strokeWidth="1" /><circle cx="4" cy="4" r="3" /><circle cx="11.500" cy="11.500" r="3" /><path d="m5.500 6 5 4M7.500 4l1.500 5" />
        </svg>
      </ActionButton>
      <ActionButton className="w-[75px] gap-[5px]">Действия <Tri className="w-[6px] h-[6px] text-black" /></ActionButton>
    </div>
    <Player />
  </main>
);

export default function App() {
  return (
    <div className="h-screen flex flex-col bg-[#dfe8f6] text-[#15428b] font-['Liberation_Sans',sans-serif] text-[12px] leading-4 overflow-hidden">
      <TopBar />
      <Breadcrumbs />
      <div className="flex-1 min-h-0 flex gap-1 px-1 pt-1 pb-1">
        <TreePanel />
        <LessonPanel />
      </div>
    </div>
  );
}
